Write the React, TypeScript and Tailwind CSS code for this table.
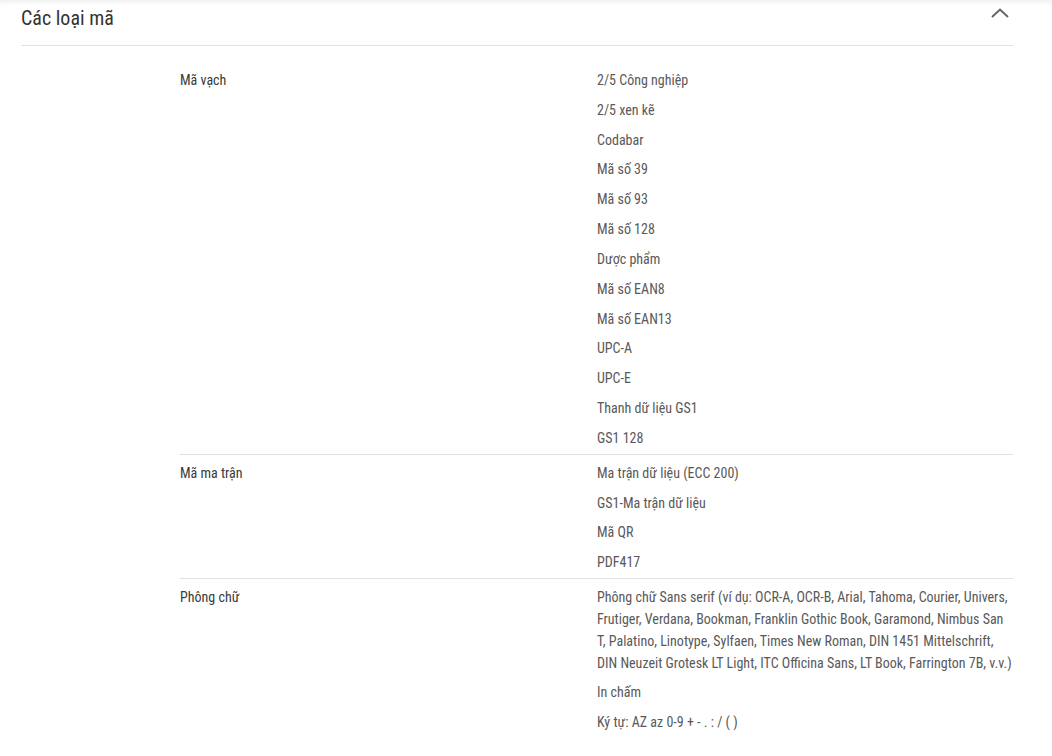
import React from 'react';

interface SpecRow {
  label: string;
  values: string[];
}

const rows: SpecRow[] = [
  {
    label: 'Mã vạch',
    values: [
      '2/5 Công nghiệp',
      '2/5 xen kẽ',
      'Codabar',
      'Mã số 39',
      'Mã số 93',
      'Mã số 128',
      'Dược phẩm',
      'Mã số EAN8',
      'Mã số EAN13',
      'UPC-A',
      'UPC-E',
      'Thanh dữ liệu GS1',
      'GS1 128',
    ],
  },
  {
    label: 'Mã ma trận',
    values: ['Ma trận dữ liệu (ECC 200)', 'GS1-Ma trận dữ liệu', 'Mã QR', 'PDF417'],
  },
  {
    label: 'Phông chữ',
    values: [
      'Phông chữ Sans serif (ví dụ: OCR-A, OCR-B, Arial, Tahoma, Courier, Univers, Frutiger, Verdana, Bookman, Franklin Gothic Book, Garamond, Nimbus San T, Palatino, Linotype, Sylfaen, Times New Roman, DIN 1451 Mittelschrift, DIN Neuzeit Grotesk LT Light, ITC Officina Sans, LT Book, Farrington 7B, v.v.)',
      'In chấm',
      'Ký tự: AZ az 0-9 + - . : / ( )',
    ],
  },
];

const App: React.FC = () => {
  return (
    <div className="min-h-screen bg-white font-['Roboto_Condensed','Roboto',sans-serif] [font-stretch:condensed] shadow-[inset_0_5px_5px_-3px_rgba(0,0,0,0.07)]">
      <div className="px-[21px] w-[1034px]">
        <div className="flex items-center justify-between h-[46px] border-b border-[#e0e0e0]">
          <h2 className="text-[20px] leading-[26px] text-[#333] pb-[10px]">Các loại mã</h2>
          <button className="mr-[4px] pb-[20px] text-[#666]">
            <svg width="18" height="10" viewBox="0 0 18 10" fill="none">
              <path d="M1 9L9 1.5L17 9" stroke="currentColor" strokeWidth="2" />
            </svg>
          </button>
        </div>

        <div className="pl-[159px] pt-[20px]">
          {rows.map((row, i) => (
            <div
              key={row.label}
              className={`grid grid-cols-[417px_1fr] text-[14px] leading-[1.56] ${i < rows.length - 1 ? 'border-b border-[#e0e0e0]' : ''} ${i > 0 ? 'pt-[4px]' : ''}`}
            >
              <div className="py-[4px] text-[#3a3a3a]">{row.label}</div>
              <div className="text-[#595959]">
                {row.values.map(v => (
                  <div key={v} className="py-[4px]">{v}</div>
                ))}
              </div>
            </div>
          ))}
        </div>
      </div>
    </div>
  );
};

export default App;
